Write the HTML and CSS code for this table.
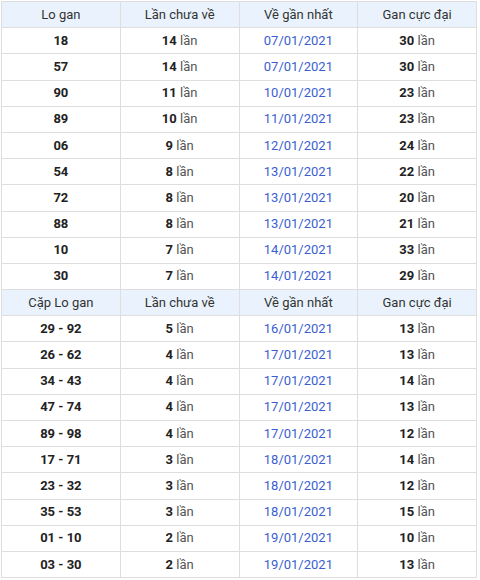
FILE: index.html
```html
<!DOCTYPE html>
<html lang="vi">
<head>
<meta charset="utf-8">
<title>Lo gan</title>
<link rel="stylesheet" href="styles.css">
</head>
<body>
<table class="gan">
  <tr class="head"><th>Lo gan</th><th>Lần chưa về</th><th>Về gần nhất</th><th>Gan cực đại</th></tr>
  <tr><td class="num">18</td><td><b>14</b> <span class="u">lần</span></td><td class="date">07/01/2021</td><td><b>30</b> <span class="u">lần</span></td></tr>
  <tr><td class="num">57</td><td><b>14</b> <span class="u">lần</span></td><td class="date">07/01/2021</td><td><b>30</b> <span class="u">lần</span></td></tr>
  <tr><td class="num">90</td><td><b>11</b> <span class="u">lần</span></td><td class="date">10/01/2021</td><td><b>23</b> <span class="u">lần</span></td></tr>
  <tr><td class="num">89</td><td><b>10</b> <span class="u">lần</span></td><td class="date">11/01/2021</td><td><b>23</b> <span class="u">lần</span></td></tr>
  <tr><td class="num">06</td><td><b>9</b> <span class="u">lần</span></td><td class="date">12/01/2021</td><td><b>24</b> <span class="u">lần</span></td></tr>
  <tr><td class="num">54</td><td><b>8</b> <span class="u">lần</span></td><td class="date">13/01/2021</td><td><b>22</b> <span class="u">lần</span></td></tr>
  <tr><td class="num">72</td><td><b>8</b> <span class="u">lần</span></td><td class="date">13/01/2021</td><td><b>20</b> <span class="u">lần</span></td></tr>
  <tr><td class="num">88</td><td><b>8</b> <span class="u">lần</span></td><td class="date">13/01/2021</td><td><b>21</b> <span class="u">lần</span></td></tr>
  <tr><td class="num">10</td><td><b>7</b> <span class="u">lần</span></td><td class="date">14/01/2021</td><td><b>33</b> <span class="u">lần</span></td></tr>
  <tr><td class="num">30</td><td><b>7</b> <span class="u">lần</span></td><td class="date">14/01/2021</td><td><b>29</b> <span class="u">lần</span></td></tr>
  <tr class="head"><th>Cặp Lo gan</th><th>Lần chưa về</th><th>Về gần nhất</th><th>Gan cực đại</th></tr>
  <tr><td class="num">29 - 92</td><td><b>5</b> <span class="u">lần</span></td><td class="date">16/01/2021</td><td><b>13</b> <span class="u">lần</span></td></tr>
  <tr><td class="num">26 - 62</td><td><b>4</b> <span class="u">lần</span></td><td class="date">17/01/2021</td><td><b>13</b> <span class="u">lần</span></td></tr>
  <tr><td class="num">34 - 43</td><td><b>4</b> <span class="u">lần</span></td><td class="date">17/01/2021</td><td><b>14</b> <span class="u">lần</span></td></tr>
  <tr><td class="num">47 - 74</td><td><b>4</b> <span class="u">lần</span></td><td class="date">17/01/2021</td><td><b>13</b> <span class="u">lần</span></td></tr>
  <tr><td class="num">89 - 98</td><td><b>4</b> <span class="u">lần</span></td><td class="date">17/01/2021</td><td><b>12</b> <span class="u">lần</span></td></tr>
  <tr><td class="num">17 - 71</td><td><b>3</b> <span class="u">lần</span></td><td class="date">18/01/2021</td><td><b>14</b> <span class="u">lần</span></td></tr>
  <tr><td class="num">23 - 32</td><td><b>3</b> <span class="u">lần</span></td><td class="date">18/01/2021</td><td><b>12</b> <span class="u">lần</span></td></tr>
  <tr><td class="num">35 - 53</td><td><b>3</b> <span class="u">lần</span></td><td class="date">18/01/2021</td><td><b>15</b> <span class="u">lần</span></td></tr>
  <tr><td class="num">01 - 10</td><td><b>2</b> <span class="u">lần</span></td><td class="date">19/01/2021</td><td><b>10</b> <span class="u">lần</span></td></tr>
  <tr><td class="num">03 - 30</td><td><b>2</b> <span class="u">lần</span></td><td class="date">19/01/2021</td><td><b>13</b> <span class="u">lần</span></td></tr>
</table>
</body>
</html>
```
FILE: styles.css
```css
html, body {
  margin: 0;
  padding: 0;
  background: #fff;
}
body {
  padding: 1px;
  font-family: Roboto, "Liberation Sans", Arial, sans-serif;
  font-size: 13px;
  color: #222;
}
.gan {
  width: 476px;
  border-collapse: collapse;
  table-layout: fixed;
}
.gan th, .gan td {
  border: 1px solid #dedede;
  height: 25.2px;
  padding: 0;
  text-align: center;
  vertical-align: middle;
  line-height: 16px;
}
.gan th {
  font-weight: normal;
  background: #eaf3fd;
  color: #333;
}
.num {
  font-weight: bold;
  color: #222;
}
.gan b {
  font-weight: bold;
  color: #222;
}
.u {
  color: #555;
}
.date {
  color: #3a5ed0;
}
```
